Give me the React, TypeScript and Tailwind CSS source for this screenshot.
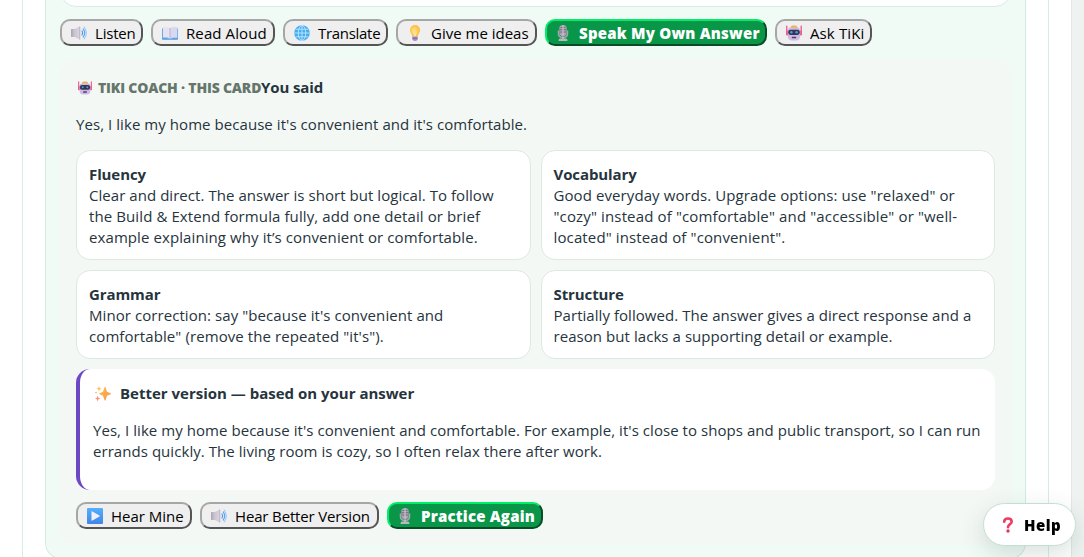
import React from 'react';

type IconProps = { className?: string };

const SpeakerIcon: React.FC<IconProps> = ({ className }) => (
  <svg viewBox="0 0 16 16" className={className}>
    <defs>
      <linearGradient id="spk" x1="0" y1="0" x2="1" y2="0">
        <stop offset="0" stopColor="#aaa3b0" />
        <stop offset="0.35" stopColor="#c9c2cf" />
        <stop offset="1" stopColor="#ded8e3" />
      </linearGradient>
    </defs>
    <path d="M0 4.6Q0 4 .7 4H4L8.4 1.5Q9.2 1.2 9.2 2v12q0 .9-.8.5L4 12H.7Q0 12 0 11.300Z" fill="url(#spk)" />
    <path d="M8.300 1.600q.9-.4.9.4v12q0 .9-.9.4Z" fill="#b9b0c0" />
    <path d="M11 6q1.300 2 0 4" fill="none" stroke="#4a94e6" strokeWidth="1.200" strokeLinecap="round" />
    <path d="M12.200 3.900q3 4.100 0 8.200" fill="none" stroke="#5aa5f0" strokeWidth="1.200" strokeLinecap="round" />
    <path d="M13.300 1.900q4.200 6.100 0 12.200" fill="none" stroke="#8ec5fa" strokeWidth="1" strokeLinecap="round" />
  </svg>
);

const BookIcon: React.FC<IconProps> = ({ className }) => (
  <svg viewBox="0 0 16 16" className={className}>
    <path d="M0 3.500h16V14q0 .8-.8.8H.8Q0 14.800 0 14Z" fill="#4a9be6" />
    <path d="M.8 2.200Q5 1.600 8 3.200q3-1.600 7.200-1v10.600Q11 12.200 8 13.600 5 12.200.8 12.800Z" fill="#e6e1f0" />
    <path d="M8 3.200q3-1.600 7.200-1v10.600Q11 12.200 8 13.600Z" fill="#d8d9ef" />
    <path d="M7.500 3v10.400h1V3Z" fill="#b3b5d4" />
    <path d="M.8 12.900Q5 12.200 8 13.700q3-1.500 7.200-.8" fill="none" stroke="#9cc8f2" strokeWidth=".8" />
  </svg>
);

const GlobeIcon: React.FC<IconProps> = ({ className }) => (
  <svg viewBox="0 0 16 16" className={className}>
    <circle cx="8" cy="8" r="7.800" fill="#44aef2" />
    <g fill="none" stroke="#c6e9ff" strokeWidth=".85">
      <ellipse cx="8" cy="8" rx="3.700" ry="7.500" />
      <path d="M8 .3v15.400M.3 8h15.400M1.700 4.200h12.600M1.700 11.800h12.600" />
    </g>
  </svg>
);

const BulbIcon: React.FC<IconProps> = ({ className }) => (
  <svg viewBox="0 0 16 16" className={className}>
    <defs>
      <radialGradient id="bulb" cx=".45" cy=".5" r=".65">
        <stop offset="0" stopColor="#ffe59a" />
        <stop offset=".55" stopColor="#ffc84f" />
        <stop offset="1" stopColor="#f8ad35" />
      </radialGradient>
    </defs>
    <path d="M8 0a5 5 0 0 1 5 5c0 2.700-1.800 3.600-2.300 6.500H5.300C4.800 8.600 3 7.700 3 5a5 5 0 0 1 5-5Z" fill="url(#bulb)" />
    <path d="M6.800 6.500 7.500 11h1l.7-4.500" fill="none" stroke="#fff3c4" strokeWidth=".8" />
    <path d="M5.400 11.500h5.200v2.700Q10.400 16 8 16t-2.600-1.800Z" fill="#a98bc0" />
    <path d="M5.400 13.200h5.200" stroke="#765b91" strokeWidth=".8" />
  </svg>
);

const MicIcon: React.FC<IconProps> = ({ className }) => (
  <svg viewBox="0 0 16 16" className={className}>
    <path d="M3.500 5.500v3.200q0 3.700 4.500 3.700t4.500-3.700V5.500" fill="none" stroke="#a9a3b0" strokeWidth="1.500" />
    <rect x="4.300" y="0" width="7.400" height="11" rx="3.600" fill="#aaa4b2" />
    <path d="M5.500 2.500h5M4.500 4.700h7M4.500 7h7" stroke="#736a7d" strokeWidth=".9" />
    <path d="M8 .5v10" stroke="#d2cdd8" strokeWidth="1" />
    <path d="M7 11.500h2v2h2.200q1.300.4 1.300 2.500h-9q0-2.100 1.300-2.500H7Z" fill="#bcb5c3" />
  </svg>
);

const RobotIcon: React.FC<IconProps> = ({ className }) => (
  <svg viewBox="0 0 16 16" className={className}>
    <path d="M.8 1v8.500M15.200 1v8.500" stroke="#e94e83" strokeWidth="1.200" strokeLinecap="round" />
    <rect x="0" y="5.500" width="2.500" height="5" rx="1" fill="#ed5b8b" />
    <rect x="13.500" y="5.500" width="2.500" height="5" rx="1" fill="#ed5b8b" />
    <path d="M5 1.500Q5.500.6 6.500.6h3q1 0 1.500.9l.5 1.500h-7Z" fill="#f5b343" />
    <path d="M4.500 2.500h7Q14 2.700 14.200 6v4.500q0 5-4.200 5H6q-4.200 0-4.200-5V6Q2 2.700 4.500 2.500Z" fill="#cdb9e3" />
    <rect x="2.200" y="4.700" width="11.600" height="5.200" rx="2.300" fill="#373452" />
    <circle cx="5.400" cy="7.200" r="1.200" fill="#3ba4ed" />
    <circle cx="10.600" cy="7.200" r="1.200" fill="#3ba4ed" />
    <rect x="5.800" y="11.700" width="4.400" height="1.600" rx=".6" fill="#493e63" />
  </svg>
);

const SparklesIcon: React.FC<IconProps> = ({ className }) => (
  <svg viewBox="0 0 16 16" className={className}>
    <defs>
      <linearGradient id="star" x1="0" y1="0" x2="1" y2="1">
        <stop offset="0" stopColor="#ffbf49" />
        <stop offset="1" stopColor="#f99355" />
      </linearGradient>
    </defs>
    <path d="M9.600 1.200q.5-.9 1 0L12 5.800l3.600 1.500q.8.500 0 1L12 9.800l-1.400 4.500q-.5.900-1 0L8 9.800 4.600 8.300q-.8-.5 0-1L8 5.800Z" fill="url(#star)" />
    <path d="M4 0l.8 1.900 1.900.8-1.900.8L4 5.400l-.8-1.900-1.900-.8 1.900-.8Z" fill="#ffc460" />
    <path d="m2.600 9.500.8 2.200 2.100.8-2.100.8-.8 2.300-.8-2.300-1.800-.8 1.800-.8Z" fill="#fb9275" />
    <circle cx="1" cy="6.500" r=".8" fill="#fba16a" />
  </svg>
);

const PlayIcon: React.FC<IconProps> = ({ className }) => (
  <svg viewBox="0 0 16 16" className={className}>
    <defs>
      <linearGradient id="play" x1="0" y1="0" x2="0" y2="1">
        <stop offset="0" stopColor="#56b0fa" />
        <stop offset="1" stopColor="#4385e4" />
      </linearGradient>
    </defs>
    <rect width="16" height="16" rx="1" fill="url(#play)" />
    <path d="M4.500 4q0-1 .9-.5l7 4q.8.500 0 1l-7 4q-.9.500-.9-.5Z" fill="#f2f0fb" />
  </svg>
);

const QuestionIcon: React.FC<IconProps> = ({ className }) => (
  <svg viewBox="0 0 16 16" className={className}>
    <path d="M4.200 4.700C4.300.5 11.500.400 11.700 4.600c.1 2.600-3.500 2.800-3.700 5.500" fill="none" stroke="#ef3b64" strokeWidth="2.600" strokeLinecap="round" />
    <circle cx="8" cy="14" r="1.700" fill="#ee3158" />
  </svg>
);

interface ActionButtonProps {
  icon: React.FC<IconProps>;
  label: string;
  width: string;
  tracking: string;
  primary?: boolean;
}

const ActionButton: React.FC<ActionButtonProps> = ({ icon: Icon, label, width, tracking, primary }) => (
  <button
    className={`flex h-[27px] shrink-0 items-center whitespace-nowrap rounded-[10px] border-2 text-[15px] leading-[21px] ${width} ${
      primary
        ? 'border-t-[#00ed68] border-r-[#064d26] border-b-[#064d26] border-l-[#00ed68] bg-[#0a9648] pl-2 font-extrabold text-white'
        : 'border-t-[#a6a6a6] border-r-[#555] border-b-[#555] border-l-[#a6a6a6] bg-[#efefef] pl-[9px] text-black'
    }`}
  >
    <Icon className="mr-2 h-4 w-4 shrink-0" />
    <span className={`pt-0.5 ${tracking}`}>{label}</span>
  </button>
);

interface FeedbackCardProps {
  title: string;
  lines: { text: string; tracking: string }[];
}

const FeedbackCard: React.FC<FeedbackCardProps> = ({ title, lines }) => (
  <div className="rounded-[14px] border border-[#dce9e3] bg-white px-3 pt-[13px] pb-[11px]">
    <h4 className="font-bold tracking-[-0.1px]">{title}</h4>
    {lines.map((line) => (
      <p key={line.text} className={`whitespace-nowrap ${line.tracking}`}>{line.text}</p>
    ))}
  </div>
);

const feedback: FeedbackCardProps[] = [
  {
    title: 'Fluency',
    lines: [
      { text: 'Clear and direct. The answer is short but logical. To follow', tracking: 'tracking-[0.05px]' },
      { text: 'the Build & Extend formula fully, add one detail or brief', tracking: 'tracking-[0.1px]' },
      { text: 'example explaining why it’s convenient or comfortable.', tracking: 'tracking-[0.09px]' },
    ],
  },
  {
    title: 'Vocabulary',
    lines: [
      { text: 'Good everyday words. Upgrade options: use "relaxed" or', tracking: 'tracking-[0.09px]' },
      { text: '"cozy" instead of "comfortable" and "accessible" or "well-', tracking: 'tracking-[0.14px]' },
      { text: 'located" instead of "convenient".', tracking: 'tracking-[0.13px]' },
    ],
  },
  {
    title: 'Grammar',
    lines: [
      { text: 'Minor correction: say "because it\'s convenient and', tracking: 'tracking-[0.07px]' },
      { text: 'comfortable" (remove the repeated "it\'s").', tracking: 'tracking-[0.09px]' },
    ],
  },
  {
    title: 'Structure',
    lines: [
      { text: 'Partially followed. The answer gives a direct response and a', tracking: 'tracking-[0.05px]' },
      { text: 'reason but lacks a supporting detail or example.', tracking: 'tracking-[0.06px]' },
    ],
  },
];

const App: React.FC = () => {
  return (
    <div className="h-[557px] overflow-hidden bg-[#eef3f1] font-['Open_Sans','Noto_Sans',sans-serif] text-[15px] leading-[21px] text-[#26343d]">
      <main className="h-[600px] w-[1072px] border-r border-[#e1e8e5] bg-white pl-[22px]">
        <div className="h-full w-[1027px] border-x border-[#d5eee4] px-[22px]">
          <section className="h-[559px] w-[981px] rounded-b-[16px] border border-t-0 border-[#d5ebe2] bg-[#f1fbf6] px-[14px]">
            <div className="flex h-[7px] items-end overflow-hidden">
              <div className="h-10 w-full shrink-0 rounded-[16px] border border-[#dce9e3] bg-[#fcfffd]" />
            </div>

            <div className="mt-3 flex gap-2">
              <ActionButton icon={SpeakerIcon} label="Listen" width="w-[83px]" tracking="tracking-[-0.2px]" />
              <ActionButton icon={BookIcon} label="Read Aloud" width="w-[124px]" tracking="tracking-[0.1px]" />
              <ActionButton icon={GlobeIcon} label="Translate" width="w-[105px]" tracking="tracking-[-0.3px]" />
              <ActionButton icon={BulbIcon} label="Give me ideas" width="w-[141px]" tracking="tracking-normal" />
              <ActionButton icon={MicIcon} label="Speak My Own Answer" width="w-[222px]" tracking="tracking-[0.22px]" primary />
              <ActionButton icon={RobotIcon} label="Ask TiKi" width="w-[97px]" tracking="tracking-[0.12px]" />
            </div>

            {/* Coach feedback */}
            <div className="mt-[14px] h-[485px] rounded-[16px] bg-[#f4f8f5] px-4 pt-[17px]">
              <div className="flex items-center whitespace-nowrap">
                <RobotIcon className="ml-[2px] mr-[6px] h-[14px] w-[14px]" />
                <span className="w-[163px] text-[14px] font-extrabold tracking-[-0.19px] text-[#65776b]">TIKI COACH · THIS CARD</span>
                <strong className="font-bold tracking-[-0.1px]">You said</strong>
              </div>
              <p className="mt-4 whitespace-nowrap tracking-[0.06px]">Yes, I like my home because it's convenient and it's comfortable.</p>

              <div className="mt-[15px] grid grid-cols-2 grid-rows-[110px_89px] gap-[10px]">
                {feedback.map((item) => (
                  <FeedbackCard key={item.title} {...item} />
                ))}
              </div>

              <div className="mt-[10px] h-[121px] rounded-[14px] border-l-4 border-[#6d48c5] bg-white pt-[14px] pl-[13px]">
                <h4 className="flex items-center font-bold">
                  <SparklesIcon className="ml-[2px] mr-[9px] h-4 w-4" />
                  Better version — based on your answer
                </h4>
                <div className="mt-4 whitespace-nowrap tracking-[0.055px]">
                  <p>Yes, I like my home because it's convenient and comfortable. For example, it's close to shops and public transport, so I can run</p>
                  <p>errands quickly. The living room is cozy, so I often relax there after work.</p>
                </div>
              </div>

              <div className="mt-3 flex gap-2">
                <ActionButton icon={PlayIcon} label="Hear Mine" width="w-[116px]" tracking="tracking-normal" />
                <ActionButton icon={SpeakerIcon} label="Hear Better Version" width="w-[179px]" tracking="tracking-[-0.15px]" />
                <ActionButton icon={MicIcon} label="Practice Again" width="w-[156px]" tracking="tracking-[0.2px]" primary />
              </div>
            </div>
          </section>
        </div>
      </main>

      <button className="fixed right-2 bottom-[11px] flex h-[43px] w-[93px] items-center rounded-full border border-[#c5ded3] bg-white pl-4 font-extrabold tracking-[0.5px] text-black shadow-[0_8px_24px_rgba(20,70,50,0.16)]">
        <QuestionIcon className="mr-2 h-4 w-4" />
        <span className="pt-0.5">Help</span>
      </button>
    </div>
  );
};

export default App;
